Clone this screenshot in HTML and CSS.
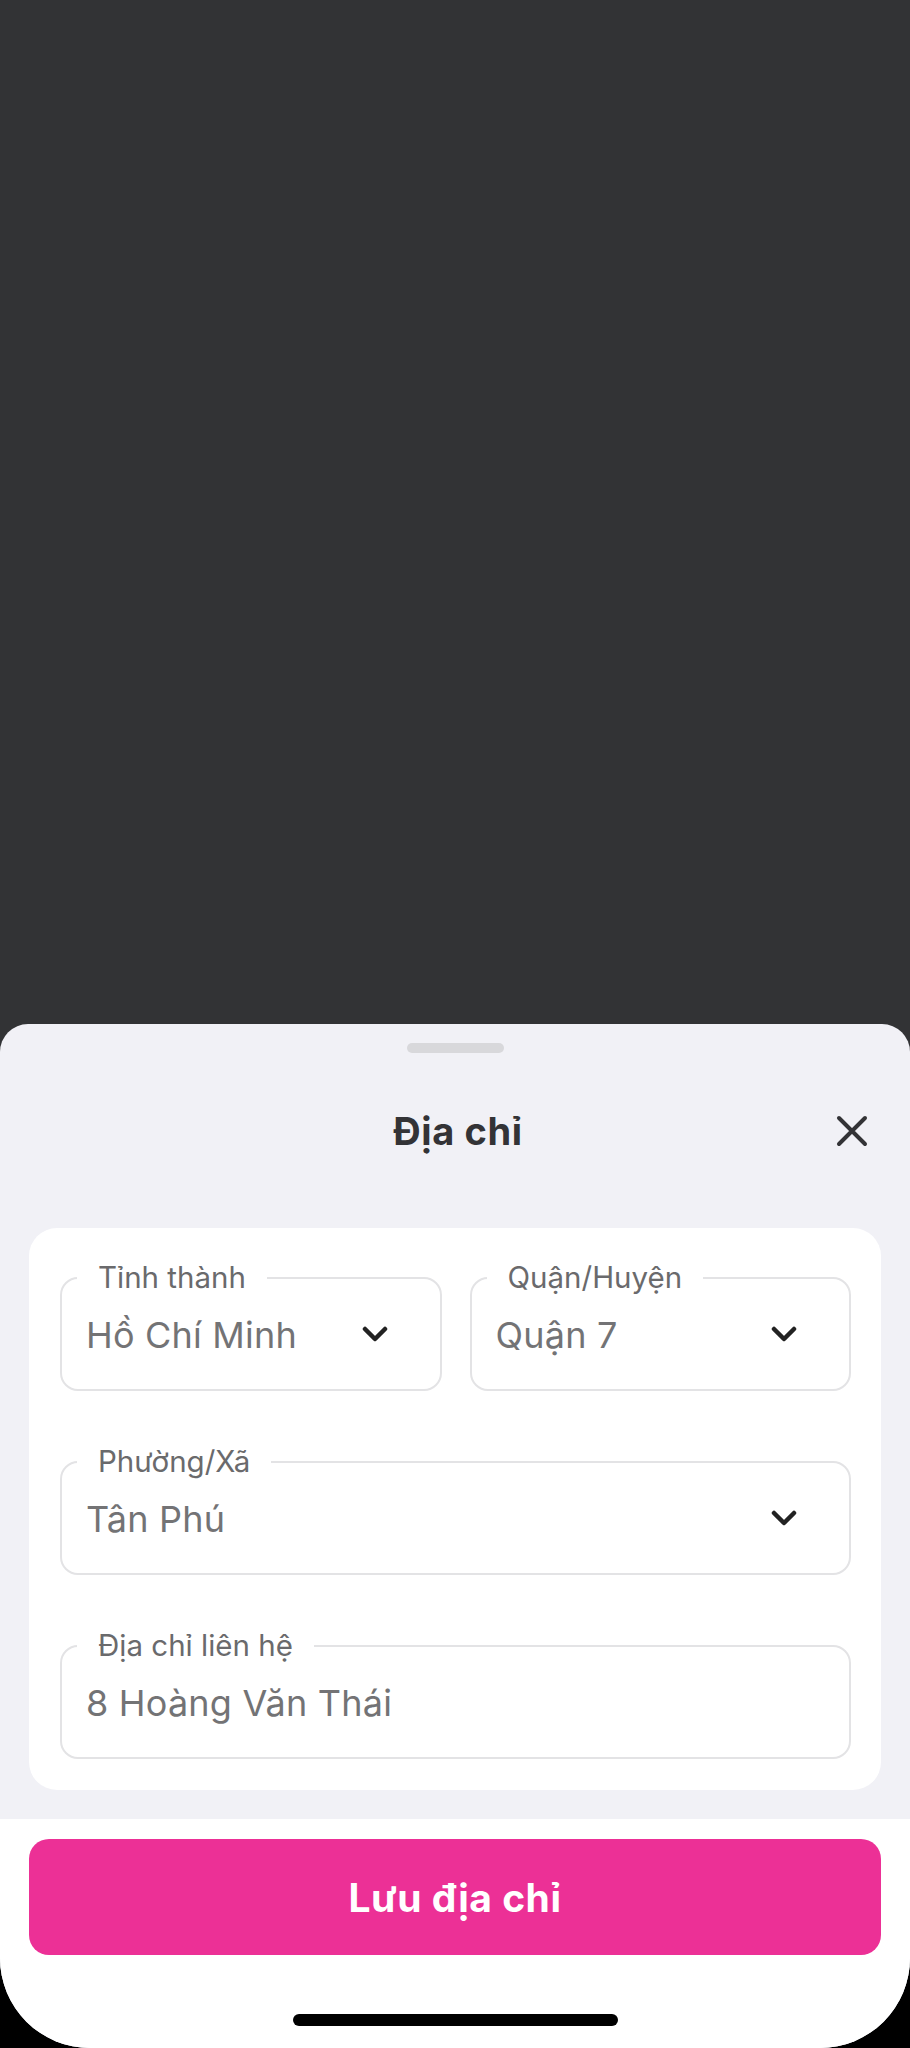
FILE: index.html
```html
<!DOCTYPE html>
<html lang="vi">
<head>
<meta charset="utf-8">
<title>Địa chỉ</title>
<link rel="stylesheet" href="styles.css">
</head>
<body>
<div class="screen">
  <div class="backdrop"></div>
  <div class="sheet">
    <div class="handle"></div>
    <div class="header">
      <span></span>
      <h1 class="title">Địa chỉ</h1>
      <button class="close" aria-label="Đóng">
        <svg width="32" height="32" viewBox="0 0 32 32"><path d="M3 3 L29 29 M29 3 L3 29" stroke="#333336" stroke-width="4" stroke-linecap="round" fill="none"/></svg>
      </button>
    </div>
    <div class="body">
      <div class="card">
        <div class="row two">
          <div class="field">
            <span class="label">Tỉnh thành</span>
            <span class="value">Hồ Chí Minh</span>
            <svg class="chev" width="26" height="16" viewBox="0 0 26 16"><polyline points="3,3 13,13 23,3" fill="none" stroke="#222" stroke-width="4.5" stroke-linecap="round" stroke-linejoin="round"/></svg>
          </div>
          <div class="field">
            <span class="label">Quận/Huyện</span>
            <span class="value">Quận 7</span>
            <svg class="chev" width="26" height="16" viewBox="0 0 26 16"><polyline points="3,3 13,13 23,3" fill="none" stroke="#222" stroke-width="4.5" stroke-linecap="round" stroke-linejoin="round"/></svg>
          </div>
        </div>
        <div class="row">
          <div class="field">
            <span class="label">Phường/Xã</span>
            <span class="value">Tân Phú</span>
            <svg class="chev" width="26" height="16" viewBox="0 0 26 16"><polyline points="3,3 13,13 23,3" fill="none" stroke="#222" stroke-width="4.5" stroke-linecap="round" stroke-linejoin="round"/></svg>
          </div>
        </div>
        <div class="row">
          <div class="field">
            <span class="label">Địa chỉ liên hệ</span>
            <span class="value">8 Hoàng Văn Thái</span>
          </div>
        </div>
      </div>
    </div>
    <div class="footer">
      <button class="save">Lưu địa chỉ</button>
      <div class="home"></div>
    </div>
  </div>
</div>
</body>
</html>
```
FILE: styles.css
```css
* { box-sizing: border-box; }
html, body { margin: 0; padding: 0; background: #000; }
body { font-family: Inter, "Noto Sans", sans-serif; }

.screen {
  width: 910px;
  height: 2048px;
  display: flex;
  flex-direction: column;
  background: #323335;
  border-radius: 0 0 90px 90px;
  overflow: hidden;
}
.backdrop { flex: 1; }

.sheet {
  background: #f1f1f6;
  border-radius: 28px 28px 0 0;
  display: flex;
  flex-direction: column;
}
.handle {
  width: 97px;
  height: 10px;
  border-radius: 5px;
  background: #d8d8db;
  margin: 19px auto 0;
}
.header {
  height: 156px;
  display: grid;
  grid-template-columns: 1fr auto 1fr;
  align-items: center;
  padding: 0 42px;
}
.title {
  margin: 0;
  font-size: 38px;
  font-weight: 700;
  color: #333336;
  letter-spacing: 0.6px;
  transform: translateX(3px);
}
.close {
  justify-self: end;
  background: none;
  border: 0;
  padding: 0;
  width: 32px;
  height: 32px;
  display: flex;
}
.body { padding: 19px 29px 29px; }
.card {
  background: #fff;
  border-radius: 28px;
  padding: 49px 30px 31px 31px;
  display: flex;
  flex-direction: column;
  gap: 70px;
}
.row.two {
  display: grid;
  grid-template-columns: 1fr 1fr;
  gap: 28px;
}
.field {
  position: relative;
  height: 114px;
  border: 2px solid #e3e3e5;
  border-radius: 18px;
  display: flex;
  align-items: center;
  padding: 0 52px 0 24px;
}
.label {
  position: absolute;
  left: 15px;
  top: -19px;
  padding: 0 21px;
  background: #fff;
  font-size: 29.5px;
  line-height: 34px;
  color: #6a6a6c;
}
.value {
  flex: 1;
  font-size: 36px;
  color: #737375;
  padding-top: 2px;
  letter-spacing: 0.2px;
}
.chev { flex: none; }

.footer {
  background: #fff;
  padding: 20px 29px 0;
  display: flex;
  flex-direction: column;
  align-items: center;
}
.save {
  width: 100%;
  height: 116px;
  border: 0;
  border-radius: 20px;
  background: #ec3096;
  color: #fff;
  font-family: Inter, "Noto Sans", sans-serif;
  font-size: 39px;
  font-weight: 700;
  letter-spacing: 0.5px;
}
.home {
  width: 325px;
  height: 12px;
  border-radius: 6px;
  background: #000;
  margin: 59px 0 22px;
}
```
